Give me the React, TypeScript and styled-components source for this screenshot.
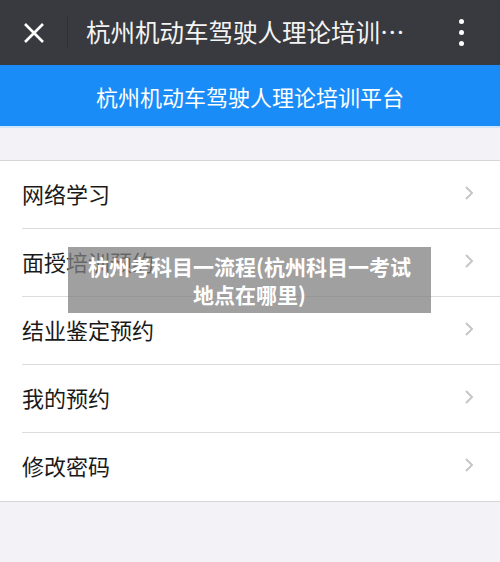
import styled, { createGlobalStyle } from "styled-components";

const GlobalStyle = createGlobalStyle`
  html, body {
    margin: 0;
    padding: 0;
    background: #f3f3f7;
    font-family: "Noto Sans CJK SC", "Noto Sans", sans-serif;
  }
`;

const Page = styled.div`
  position: relative;
  width: 500px;
  height: 562px;
  overflow: hidden;
  background: #f3f3f7;
`;

const TopBar = styled.header`
  display: flex;
  align-items: center;
  height: 65px;
  background: #393a3f;
  color: #fff;
`;

const CloseButton = styled.div`
  width: 67px;
  height: 65px;
  display: flex;
  align-items: center;
  justify-content: center;
`;

const Divider = styled.div`
  width: 1px;
  height: 32px;
  background: #2f3034;
`;

const Title = styled.div`
  flex: 1;
  min-width: 0;
  padding-left: 18px;
  padding-bottom: 2px;
  font-size: 24.5px;
  white-space: nowrap;
  overflow: hidden;
  text-overflow: ellipsis;
  color: #f4f4f4;
`;

const MoreButton = styled.div`
  width: 78px;
  flex-shrink: 0;
  display: flex;
  flex-direction: column;
  align-items: center;
  gap: 6px;
`;

const Dot = styled.span`
  width: 5px;
  height: 5px;
  border-radius: 50%;
  background: #fff;
`;

const Banner = styled.div`
  height: 61px;
  background: #1a8cf7;
  color: #fff;
  font-size: 22px;
  display: flex;
  align-items: center;
  justify-content: center;
  border-bottom: 2px solid #d2e6fa;
`;

const List = styled.ul`
  list-style: none;
  margin: 32px 0 0;
  padding: 0;
  background: #fff;
  border-top: 1px solid #d6d6da;
  border-bottom: 1px solid #d6d6da;
`;

const Row = styled.li<{ $last?: boolean }>`
  display: flex;
  align-items: center;
  justify-content: space-between;
  height: 68px;
  margin-left: 22px;
  padding: 0 26px 4px 0;
  box-sizing: border-box;
  font-size: 22px;
  color: #1a1a1a;
  border-bottom: ${({ $last }) => ($last ? "none" : "1px solid #dcdcdf")};
`;

const Overlay = styled.div`
  position: absolute;
  left: 68px;
  top: 247px;
  width: 363px;
  height: 66px;
  background: rgba(128, 128, 128, 0.75);
  color: #fff;
  font-weight: 700;
  font-size: 21px;
  line-height: 28px;
  text-align: center;
  display: flex;
  align-items: center;
  justify-content: center;
  padding: 0 10px;
  box-sizing: border-box;
`;

const items = ["网络学习", "面授培训预约", "结业鉴定预约", "我的预约", "修改密码"];

function Chevron() {
  return (
    <svg width="10" height="16" viewBox="0 0 10 16">
      <path d="M2 2 L8 8 L2 14" fill="none" stroke="#c6c6ca" strokeWidth="2" />
    </svg>
  );
}

export default function App() {
  return (
    <Page>
      <GlobalStyle />
      <TopBar>
        <CloseButton>
          <svg width="22" height="22" viewBox="0 0 22 22">
            <path d="M2 2 L20 20 M20 2 L2 20" stroke="#fff" strokeWidth="2.6" />
          </svg>
        </CloseButton>
        <Divider />
        <Title>杭州机动车驾驶人理论培训平台</Title>
        <MoreButton>
          <Dot />
          <Dot />
          <Dot />
        </MoreButton>
      </TopBar>
      <Banner>杭州机动车驾驶人理论培训平台</Banner>
      <List>
        {items.map((t, i) => (
          <Row key={t} $last={i === items.length - 1}>
            <span>{t}</span>
            <Chevron />
          </Row>
        ))}
      </List>
      <Overlay>杭州考科目一流程(杭州科目一考试地点在哪里)</Overlay>
    </Page>
  );
}
